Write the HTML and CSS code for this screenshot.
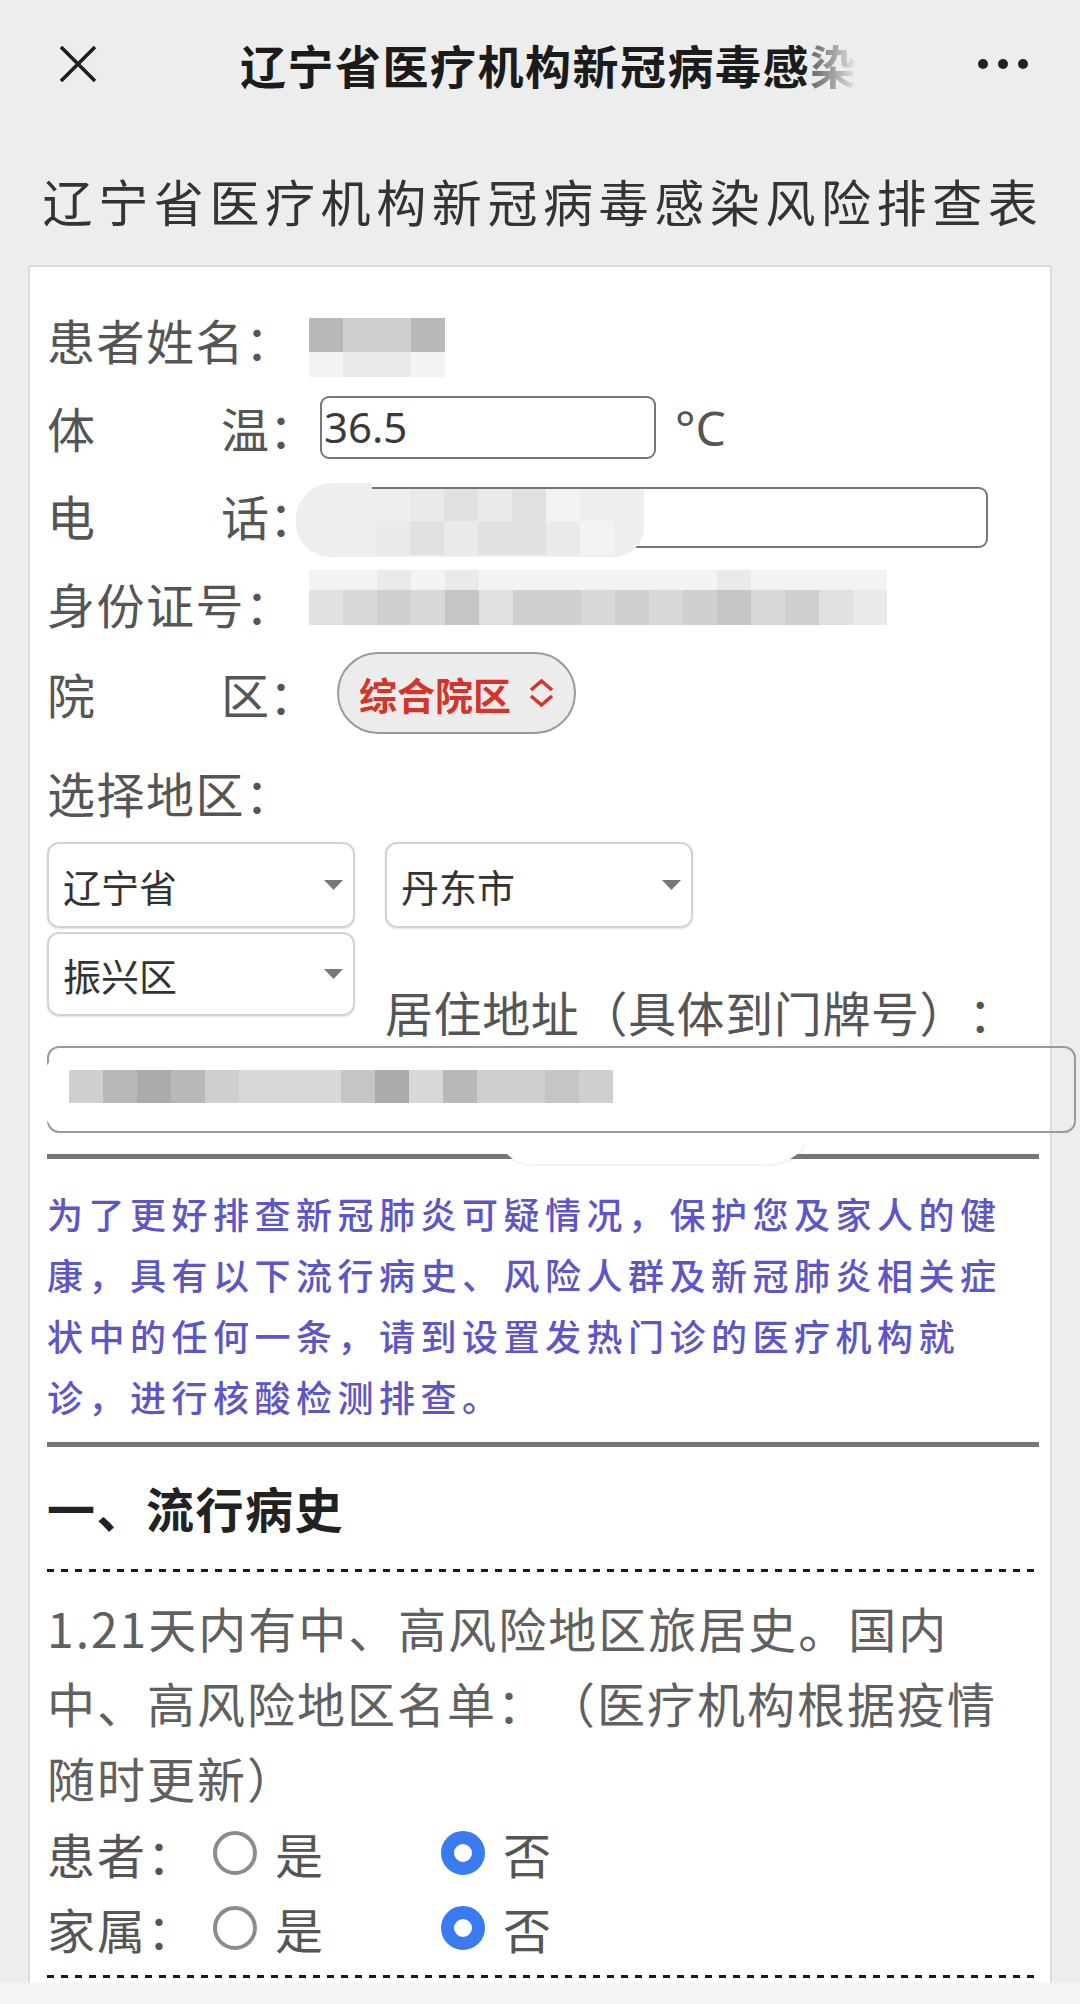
FILE: index.html
```html
<!DOCTYPE html>
<html lang="zh-CN">
<head>
<meta charset="utf-8">
<title>辽宁省医疗机构新冠病毒感染风险排查表</title>
<link rel="stylesheet" href="styles.css">
</head>
<body>
<div class="topbar">
  <svg class="close" viewBox="0 0 40 40"><path d="M3 3 L37 37 M37 3 L3 37" stroke="#1e1e1e" stroke-width="3.6" fill="none"/></svg>
  <div class="top-title">辽宁省医疗机构新冠病毒感<span class="fade">染</span></div>
  <div class="more"><i></i><i></i><i></i></div>
</div>

<h1 class="page-title">辽宁省医疗机构新冠病毒感染风险排查表</h1>

<div class="card">
  <div class="row">
    <span class="lbl">患者姓名：</span>
    <div class="pix pix-name">
      <div class="pix-row"><span class="s2"></span><span class="s4 w2"></span><span class="s2"></span></div>
      <div class="pix-row"><span class="s8"></span><span class="s7 w2"></span><span class="s8"></span></div>
    </div>
  </div>

  <div class="row">
    <span class="lbl2"><span>体</span><span>温</span></span><span class="colon">：</span>
    <div class="tin">36.5</div>
    <span class="unit">°C</span>
  </div>

  <div class="row">
    <span class="lbl2"><span>电</span><span>话</span></span><span class="colon">：</span>
    <div class="tin tin-long"></div>
    <div class="smear-phone">
      <div class="pix-row sp1"><span class="s7"></span><span class="s6"></span><span class="s7"></span><span class="s6"></span><span class="s8"></span></div>
      <div class="pix-row sp2"><span class="s7"></span><span class="s6"></span><span class="s7"></span><span class="s6"></span><span class="s6"></span><span class="s7"></span><span class="s8"></span></div>
    </div>
  </div>

  <div class="row">
    <span class="lbl">身份证号：</span>
    <div class="pix pix-id">
      <div class="pix-row faint"><span class="s8"></span><span class="s8"></span><span class="s7"></span><span class="s8"></span><span class="s7"></span><span class="s8"></span><span class="s8"></span><span class="s8"></span><span class="s8"></span><span class="s8"></span><span class="s8"></span><span class="s8"></span><span class="s7"></span><span class="s8"></span><span class="s8"></span><span class="s8"></span><span class="s8"></span></div>
      <div class="pix-row"><span class="s6"></span><span class="s5"></span><span class="s4"></span><span class="s5"></span><span class="s3"></span><span class="s6"></span><span class="s4"></span><span class="s4"></span><span class="s5"></span><span class="s4"></span><span class="s5"></span><span class="s4"></span><span class="s3"></span><span class="s5"></span><span class="s4"></span><span class="s6"></span><span class="s7"></span></div>
    </div>
  </div>

  <div class="row row-pill">
    <span class="lbl2"><span>院</span><span>区</span></span><span class="colon">：</span>
    <div class="pill">
      <span>综合院区</span>
      <svg class="updown" viewBox="0 0 27 30" width="27" height="30"><path d="M3 12 L13.5 3 L24 12 M3 18 L13.5 27 L24 18" fill="none" stroke="#d5342b" stroke-width="3.6"/></svg>
    </div>
  </div>

  <div class="sec-lbl">选择地区：</div>

  <div class="sel-row">
    <div class="sel"><span>辽宁省</span><svg class="arrow" viewBox="0 0 19 10" width="19" height="10"><path d="M0 0 H19 L9.5 10 Z" fill="#777"/></svg></div>
    <div class="sel"><span>丹东市</span><svg class="arrow" viewBox="0 0 19 10" width="19" height="10"><path d="M0 0 H19 L9.5 10 Z" fill="#777"/></svg></div>
  </div>
  <div class="sel-row sel-row2">
    <div class="sel"><span>振兴区</span><svg class="arrow" viewBox="0 0 19 10" width="19" height="10"><path d="M0 0 H19 L9.5 10 Z" fill="#777"/></svg></div>
    <span class="addr-lbl">居住地址（具体到门牌号）：</span>
  </div>

  <div class="addr-block">
    <div class="addr">
      <div class="smear-left"></div>
      <div class="pix-row addr-pix"><span class="s4"></span><span class="s2"></span><span class="s1"></span><span class="s2"></span><span class="s4"></span><span class="s5"></span><span class="s5"></span><span class="s5"></span><span class="s3"></span><span class="s1"></span><span class="s5"></span><span class="s2"></span><span class="s4"></span><span class="s4"></span><span class="s3"></span><span class="s4"></span></div>
    </div>
    <div class="thick thick1"></div>
    <div class="smear-line"></div>
  </div>

  <p class="notice">为了更好排查新冠肺炎可疑情况，保护您及家人的健康，具有以下流行病史、风险人群及新冠肺炎相关症状中的任何一条，请到设置发热门诊的医疗机构就诊，进行核酸检测排查。</p>

  <div class="thick thick2"></div>

  <h2 class="sec-title">一、流行病史</h2>

  <div class="dash dash1"></div>

  <p class="question">1.21天内有中、高风险地区旅居史。国内中、高风险地区名单：（医疗机构根据疫情随时更新）</p>

  <div class="radio-row">
    <span class="q-lbl">患者：</span>
    <span class="radio"></span><span class="opt">是</span>
    <span class="radio on"></span><span class="opt">否</span>
  </div>
  <div class="radio-row">
    <span class="q-lbl">家属：</span>
    <span class="radio"></span><span class="opt">是</span>
    <span class="radio on"></span><span class="opt">否</span>
  </div>

  <div class="dash dash2"></div>
</div>

<div class="bottom-bar"></div>
</body>
</html>
```

FILE: styles.css
```css
html, body {
  margin: 0;
  padding: 0;
}
body {
  background: #ededed;
  font-family: "Noto Sans CJK SC", "Noto Sans", sans-serif;
  color: #555;
  text-spacing-trim: space-all;
}

/* ---------- top bar ---------- */
.topbar {
  display: flex;
  align-items: center;
  height: 128px;
}
.close {
  width: 40px;
  height: 40px;
  margin-left: 58px;
  flex: none;
}
.top-title {
  margin-left: 142px;
  font-size: 46px;
  font-weight: 700;
  letter-spacing: 1.5px;
  color: #1b1b1b;
  white-space: nowrap;
  line-height: 1;
}
.fade {
  background: linear-gradient(90deg, #666 0%, #aaa 55%, rgba(237, 237, 237, 0) 100%);
  -webkit-background-clip: text;
  background-clip: text;
  color: transparent;
}
.more {
  margin-left: auto;
  margin-right: 52px;
  display: flex;
  gap: 10px;
}
.more i {
  display: block;
  width: 10px;
  height: 10px;
  border-radius: 50%;
  background: #222;
}

/* ---------- page title ---------- */
.page-title {
  margin: 37px 0 30px;
  padding-left: 6px;
  font-size: 50px;
  font-weight: 400;
  line-height: 70px;
  letter-spacing: 5.6px;
  text-align: center;
  color: #333;
}

/* ---------- card ---------- */
.card {
  margin: 0 28px;
  background: #fff;
  border: 2px solid #dcdcdc;
  border-bottom: none;
  padding: 28px 11px 80px 17px;
}

.row {
  position: relative;
  display: flex;
  align-items: center;
  height: 88px;
  font-size: 48px;
  color: #555;
}
.row-pill {
  height: 92px;
}
.lbl {
  letter-spacing: 1.5px;
  white-space: nowrap;
}
.lbl2 {
  display: flex;
  justify-content: space-between;
  width: 222px;
}
.colon {
  width: 48px;
}

/* pixelated privacy blocks */
.pix {
  display: flex;
  flex-direction: column;
  align-self: flex-start;
}
.pix-row {
  display: flex;
}
.pix-row span {
  display: block;
  width: 34px;
  height: 34px;
}
.pix-row span.w2 {
  width: 68px;
}
.s1 { background: #ababab; }
.s2 { background: #b9b9b9; }
.s3 { background: #c5c5c5; }
.s4 { background: #cfcfcf; }
.s5 { background: #d8d8d8; }
.s6 { background: #e1e1e1; }
.s7 { background: #eaeaea; }
.s8 { background: #f3f3f3; }

.pix-name {
  margin-left: 14px;
  margin-top: 23px;
}
.pix-name .pix-row + .pix-row span {
  height: 25px;
}
.pix-id {
  margin-left: 14px;
  margin-top: 11px;
}
.pix-id .faint span {
  height: 20px;
}
.pix-id .pix-row + .pix-row span {
  height: 35px;
}

/* inputs */
.tin {
  box-sizing: border-box;
  width: 336px;
  height: 63px;
  margin-left: 3px;
  border: 2px solid #777;
  border-radius: 9px;
  padding-left: 2px;
  font-family: "Noto Sans", sans-serif;
  font-size: 42px;
  line-height: 57px;
  color: #3a3a3a;
}
.tin-long {
  width: 668px;
  height: 61px;
  margin-top: 4px;
}
.unit {
  margin-left: 19px;
  font-family: "Noto Sans", sans-serif;
  font-size: 48px;
  color: #555;
}

.smear-phone {
  position: absolute;
  left: 249px;
  top: 12px;
  width: 348px;
  height: 74px;
  background: #eeeeee;
  border-radius: 36px 10px 30px 34px;
  clip-path: polygon(0 0, 76px 0, 76px 6px, 100% 6px, 100% 100%, 0 100%);
}
.smear-phone .sp1 {
  margin: 4px 0 0 114px;
}
.smear-phone .sp2 {
  margin: 0 0 0 80px;
}
.smear-phone .pix-row span {
  height: 34px;
}

/* pill */
.pill {
  display: flex;
  align-items: center;
  gap: 17px;
  box-sizing: border-box;
  height: 82px;
  margin-left: 20px;
  padding: 0 19px 0 20px;
  border: 2px solid #9a9a9a;
  border-radius: 41px;
  background: #ececec;
  font-size: 38px;
  font-weight: 700;
  color: #d5342b;
}
.updown {
  display: block;
}

/* region */
.sec-lbl {
  margin-top: 23px;
  font-size: 48px;
  line-height: 60px;
  letter-spacing: 1.5px;
  color: #555;
}
.sel-row {
  display: flex;
  gap: 30px;
  margin-top: 20px;
}
.sel-row2 {
  margin-top: 4px;
  align-items: flex-start;
}
.sel {
  box-sizing: border-box;
  width: 308px;
  height: 86px;
  display: flex;
  align-items: center;
  justify-content: space-between;
  padding: 0 10px 0 14px;
  border: 2px solid #d2d2d2;
  border-radius: 12px;
  box-shadow: 0 1px 2px rgba(0, 0, 0, 0.12);
  font-size: 38px;
  color: #333;
}
.sel-row2 .sel {
  height: 84px;
}
.arrow {
  display: block;
}
.addr-lbl {
  margin-top: 49px;
  font-size: 48px;
  line-height: 60px;
  letter-spacing: 0.6px;
  white-space: nowrap;
  color: #555;
}

.addr-block {
  position: relative;
}
.addr {
  position: relative;
  box-sizing: border-box;
  width: calc(100% + 37px);
  height: 87px;
  margin-top: 5px;
  padding: 22px 0 0 20px;
  border: 2px solid #9a9a9a;
  border-radius: 12px;
}
.addr-pix {
  position: relative;
}
.addr-pix span {
  height: 33px;
}
.smear-left {
  position: absolute;
  left: -8px;
  top: 12px;
  width: 26px;
  height: 66px;
  background: #fff;
  border-radius: 50%;
}
.smear-line {
  position: absolute;
  left: 456px;
  top: 96px;
  width: 300px;
  height: 22px;
  background: #fff;
  border-radius: 0 0 40px 30px / 0 0 20px 20px;
  box-shadow: 1px 2px 2px rgba(0, 0, 0, 0.06);
}

.thick {
  height: 5px;
  background: #767676;
}
.thick1 {
  margin-top: 21px;
}
.thick2 {
  margin-top: 15px;
}

.notice {
  margin: 24px 0 0;
  font-size: 36px;
  font-weight: 500;
  line-height: 61px;
  letter-spacing: 5.5px;
  color: #5e55c6;
}

.sec-title {
  margin: 30px 0 0;
  font-size: 48px;
  font-weight: 700;
  line-height: 60px;
  letter-spacing: 1.5px;
  color: #222;
}

.dash {
  height: 3px;
  background: repeating-linear-gradient(90deg, #1a1a1a 0 7px, transparent 7px 14px);
}
.dash1 {
  margin-top: 32px;
}
.dash2 {
  margin-top: 10px;
}

.question {
  margin: 18px 0 0;
  font-size: 48px;
  line-height: 75px;
  letter-spacing: 2px;
  color: #606060;
}

.radio-row {
  display: flex;
  align-items: center;
  height: 75px;
  font-size: 48px;
  letter-spacing: 2px;
  color: #555;
}
.radio {
  flex: none;
  box-sizing: border-box;
  width: 44px;
  height: 44px;
  margin-left: 16px;
  border: 4px solid #8c8c8c;
  border-radius: 50%;
  background: #fff;
}
.radio.on {
  margin-left: 116px;
  border: 13px solid #3a7bef;
}
.opt {
  margin-left: 18px;
}

.bottom-bar {
  position: fixed;
  left: 0;
  right: 0;
  bottom: 0;
  height: 21px;
  background: #f4f4f4;
}
```
